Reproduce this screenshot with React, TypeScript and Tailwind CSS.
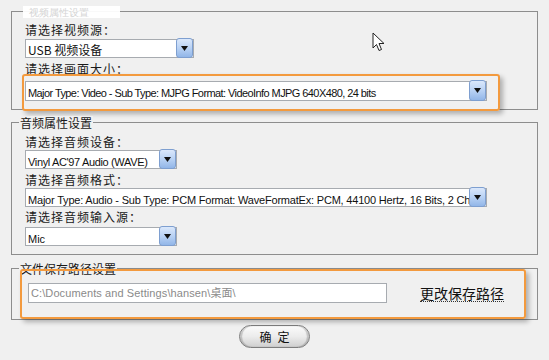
import type { ReactNode } from "react";

const CJK = "font-['SimSun','Noto_Sans_CJK_SC',sans-serif]";
const LATIN = "font-['Liberation_Sans','Noto_Sans_CJK_SC',sans-serif]";

// ─── Combo box (XP style) ──────────────────────────────────────────────────

function Combo({ className, children }: { className: string; children: ReactNode }) {
  return (
    <div className={`relative flex items-center bg-white border border-[#a7abb0] ${className}`}>
      <div className="pl-[2px] whitespace-nowrap overflow-hidden pr-[17px] text-[#111]">{children}</div>
      <div className="absolute right-[0px] -top-[2px] bottom-[-1px] w-[17px] rounded-[3px] border border-[#7e9fd0] bg-gradient-to-b from-[#dbe8fb] via-[#b9d2f4] to-[#92b6e8] flex items-center justify-center">
        <svg width="7" height="5" viewBox="0 0 7 5" aria-hidden>
          <path d="M0 0 H7 L3.5 5 Z" fill="#111" />
        </svg>
      </div>
    </div>
  );
}

function Label({ children, className = "" }: { children: ReactNode; className?: string }) {
  return (
    <div className={`h-[14px] leading-[14px] text-[12px] tracking-[1px] text-[#1a1a1a] ${CJK} ${className}`}>
      {children}
    </div>
  );
}

function Legend({ children }: { children: ReactNode }) {
  return (
    <span className={`absolute left-[7px] -top-[7px] px-[1px] bg-[#f0f0f0] text-[12px] leading-[13px] text-[#1a1a1a] ${CJK}`}>
      {children}
    </span>
  );
}

function Highlight({ className }: { className: string }) {
  return (
    <div
      className={`absolute pointer-events-none border-2 border-[#f39a3e] rounded-[3px] shadow-[3px_3px_5px_rgba(0,0,0,0.28)] ${className}`}
      aria-hidden
    />
  );
}

export default function App() {
  return (
    <div className="relative w-[549px] h-[360px] overflow-hidden bg-[#f0f0f0] px-[11px] pt-[11px]">

      {/* 视频属性（标题被涂抹） */}
      <div className="relative h-[99px] border border-[#8d8d8d] pl-[13px] pt-[11px]">
        <span className="absolute left-[11px] -top-[6px] w-[97px] h-[12px] bg-white/95 text-[10px] leading-[12px] text-[#d4d4d4] pl-[6px]">
          视频属性设置
        </span>
        <Label>请选择视频源：</Label>
        <Combo className="mt-[2px] w-[169px] h-[19px]">
          <span className={`text-[12px] ${CJK}`}>USB 视频设备</span>
        </Combo>
        <Label className="mt-[4px]">请选择画面大小：</Label>
        <div className="relative mt-[5px] w-[462px]">
          <Combo className="h-[20px] w-full">
            <span className={`text-[11px] tracking-[-0.58px] ${LATIN}`}>
              Major Type: Video - Sub Type: MJPG Format: VideoInfo MJPG 640X480, 24 bits
            </span>
          </Combo>
          <Highlight className="-left-[3px] -right-[13px] -top-[7px] -bottom-[10px]" />
        </div>
      </div>

      {/* 音频属性 */}
      <div className="relative mt-[12px] h-[133px] border border-[#8d8d8d] pl-[13px] pt-[12px]">
        <Legend>音频属性设置</Legend>
        <Label>请选择音频设备：</Label>
        <Combo className="mt-[1px] w-[152px] h-[19px]">
          <span className={`text-[11px] tracking-[-0.35px] ${LATIN}`}>Vinyl AC'97 Audio (WAVE)</span>
        </Combo>
        <Label className="mt-[4px]">请选择音频格式：</Label>
        <Combo className="mt-[1px] w-[462px] h-[19px]">
          <span className={`text-[11px] tracking-[-0.2px] ${LATIN}`}>
            Major Type: Audio - Sub Type: PCM Format: WaveFormatEx: PCM, 44100 Hertz, 16 Bits, 2 Channels
          </span>
        </Combo>
        <Label className="mt-[3px]">请选择音频输入源：</Label>
        <Combo className="mt-[3px] w-[152px] h-[19px]">
          <span className={`text-[11px] ${LATIN}`}>Mic</span>
        </Combo>
      </div>

      {/* 文件保存路径 */}
      <div className="relative mt-[13px] h-[52px] border border-[#8d8d8d] pl-[16px] pt-[14px] flex items-start">
        <Legend>文件保存路径设置</Legend>
        <div className="w-[359px] h-[20px] bg-white border border-[#a7abb0] pl-[2px] flex items-center">
          <span className={`text-[11px] tracking-[0.1px] text-[#8a8a8a] ${LATIN}`}>
            C:\Documents and Settings\hansen\桌面\
          </span>
        </div>
        <button className={`ml-[33px] mt-[3px] text-[14px] leading-[15px] text-[#111] border-b border-dotted border-[#333] ${CJK}`}>
          更改保存路径
        </button>
        <Highlight className="left-[8px] right-[11px] top-[0px] bottom-[0px]" />
      </div>

      <button
        className={`mx-auto mt-[5px] flex items-center justify-center w-[71px] h-[23px] rounded-full border border-[#7d7d7d] bg-gradient-to-b from-[#fbfbfb] via-[#ececec] to-[#cfcfcf] shadow-[inset_2px_0_1px_rgba(0,0,0,0.18),inset_-2px_0_1px_rgba(0,0,0,0.18)] text-[12px] tracking-[6px] pl-[6px] text-[#111] ${CJK}`}
      >
        确定
      </button>

      {/* 鼠标指针 */}
      <svg className="absolute left-[372px] top-[32px]" width="14" height="20" viewBox="0 0 14 20" aria-hidden>
        <path d="M1 1 L1 16 L4.5 12.5 L7 18.5 L9.5 17.5 L7 11.5 L12 11.5 Z" fill="#fff" stroke="#222" strokeWidth="1" strokeLinejoin="round" />
      </svg>
    </div>
  );
}
